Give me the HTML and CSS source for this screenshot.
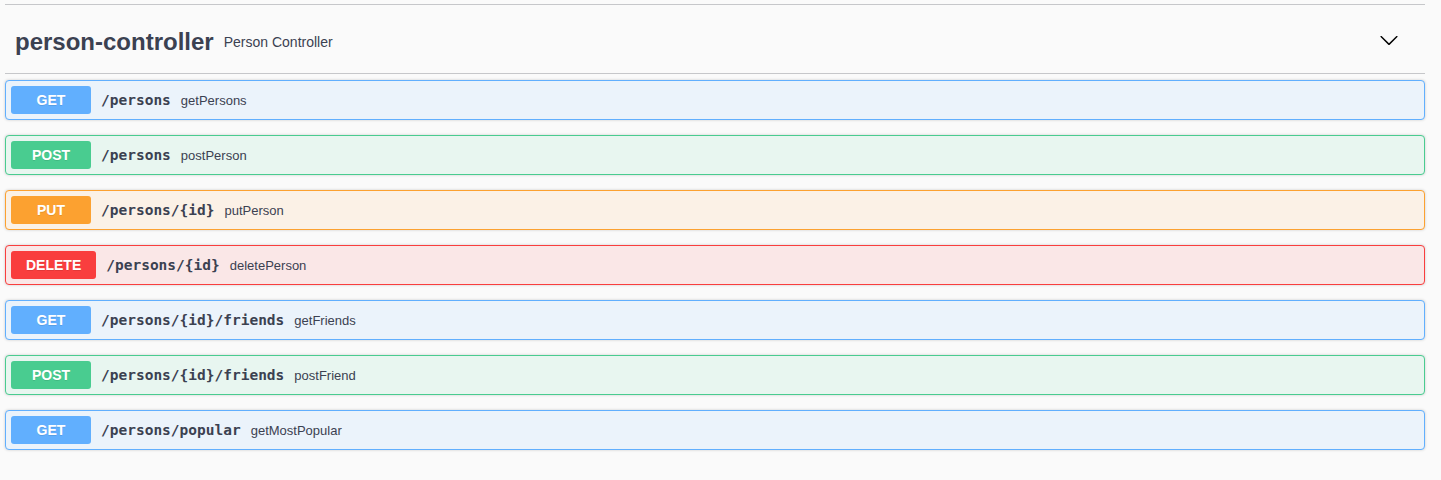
FILE: index.html
```html
<!DOCTYPE html>
<html>
<head>
<meta charset="utf-8">
<link rel="stylesheet" href="styles.css">
</head>
<body>
<div class="wrap">
  <div class="tag-section">
    <div class="tag">
      <div class="tag-title">
        <span class="tag-name">person-controller</span>
        <small class="tag-desc">Person Controller</small>
      </div>
      <svg class="arrow" width="20" height="20" viewBox="0 0 20 20"><path d="M17.418 6.109c.272-.268.709-.268.979 0s.271.701 0 .969l-7.908 7.83c-.27.268-.707.268-.979 0l-7.908-7.83c-.27-.268-.27-.701 0-.969.271-.268.709-.268.979 0L10 13.25l7.418-7.141z" fill="#000"/></svg>
    </div>
    <div class="ops">
      <div class="op get"><span class="method">GET</span><span class="path">/persons</span><span class="desc">getPersons</span></div>
      <div class="op post"><span class="method">POST</span><span class="path">/persons</span><span class="desc">postPerson</span></div>
      <div class="op put"><span class="method">PUT</span><span class="path">/persons/{id}</span><span class="desc">putPerson</span></div>
      <div class="op delete"><span class="method">DELETE</span><span class="path">/persons/{id}</span><span class="desc">deletePerson</span></div>
      <div class="op get"><span class="method">GET</span><span class="path">/persons/{id}/friends</span><span class="desc">getFriends</span></div>
      <div class="op post"><span class="method">POST</span><span class="path">/persons/{id}/friends</span><span class="desc">postFriend</span></div>
      <div class="op get"><span class="method">GET</span><span class="path">/persons/popular</span><span class="desc">getMostPopular</span></div>
    </div>
  </div>
</div>
</body>
</html>
```

FILE: styles.css
```css
html, body {
  margin: 0;
  padding: 0;
  background: #fafafa;
  font-family: "Liberation Sans", Arial, sans-serif;
  color: #3b4151;
}
.wrap {
  padding: 4px 16px 0 5px;
}
.tag-section {
  border-top: 1px solid #c6c7ca;
}
.tag {
  display: flex;
  align-items: center;
  height: 68px;
  padding: 0 26px 0 10px;
  border-bottom: 1px solid #c6c7ca;
}
.tag-title {
  flex: 1;
  display: flex;
  align-items: center;
  padding-top: 6px;
}
.tag-name {
  font-size: 24px;
  font-weight: bold;
  line-height: 28px;
}
.tag-desc {
  font-size: 14px;
  padding: 0 10px;
  line-height: 16px;
}
.arrow {
  display: block;
  margin-top: 2px;
}
.ops {
  padding-top: 6px;
}
.op {
  display: flex;
  align-items: center;
  padding: 5px;
  border: 1px solid;
  border-radius: 4px;
  margin-bottom: 15px;
  box-shadow: 0 0 3px rgba(0,0,0,.19);
}
.method {
  min-width: 80px;
  box-sizing: border-box;
  padding: 6px 15px;
  font-size: 14px;
  line-height: 16px;
  font-weight: bold;
  color: #fff;
  text-align: center;
  border-radius: 3px;
  text-shadow: 0 1px 0 rgba(0,0,0,.1);
}
.path {
  padding: 0 10px;
  font-family: "DejaVu Sans Mono", "Liberation Mono", monospace;
  font-size: 14.5px;
  font-weight: bold;
  color: #3b4151;
}
.desc {
  font-size: 13px;
  color: #3b4151;
}
.get { background: #ebf3fb; border-color: #61affe; }
.get .method { background: #61affe; }
.post { background: #e8f6f0; border-color: #49cc90; }
.post .method { background: #49cc90; }
.put { background: #fbf1e6; border-color: #fca130; }
.put .method { background: #fca130; }
.delete { background: #fae7e7; border-color: #f93e3e; }
.delete .method { background: #f93e3e; }
```
